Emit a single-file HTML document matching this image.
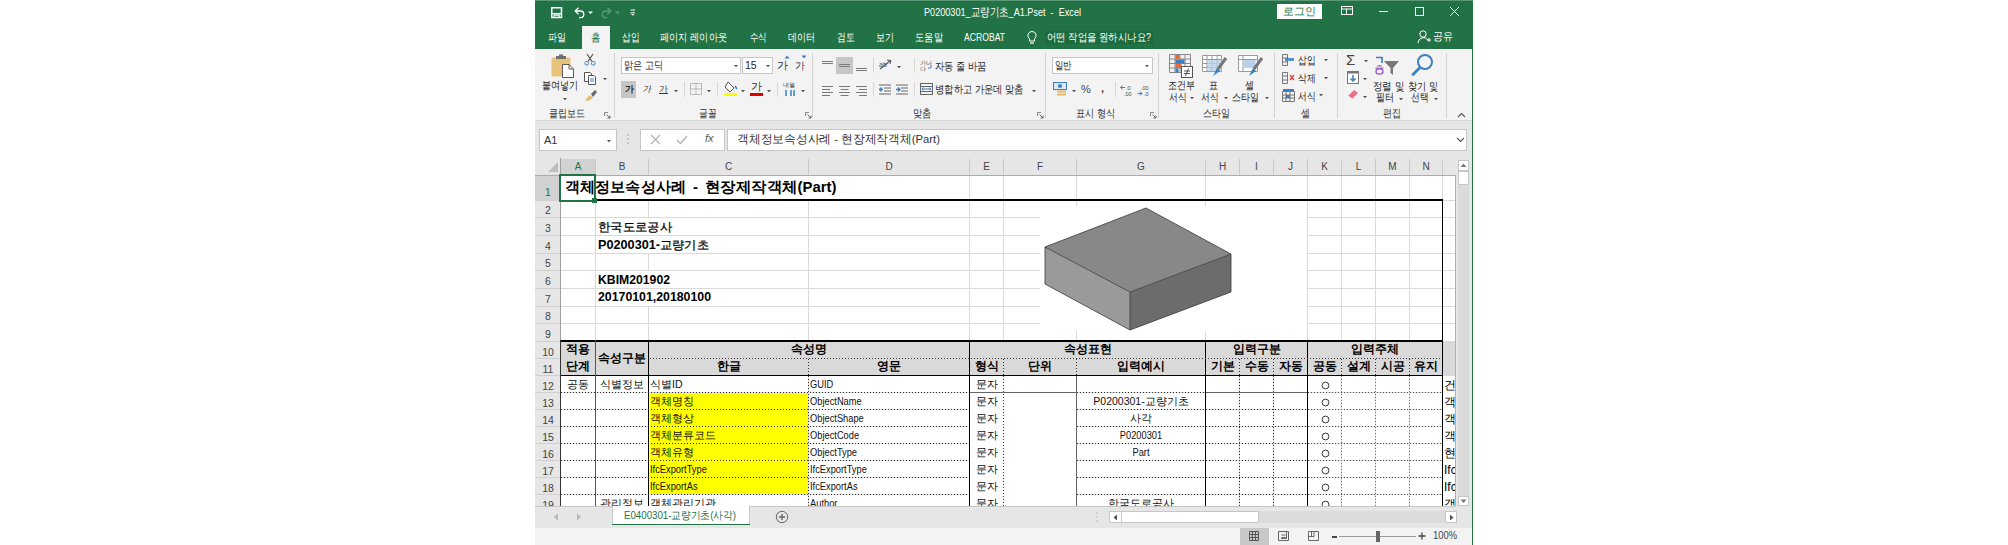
<!DOCTYPE html><html><head><meta charset="utf-8"><style>html,body{margin:0;padding:0;background:#fff;width:2008px;height:545px;overflow:hidden;font-family:"Liberation Sans", sans-serif;}div,span,svg{position:absolute;box-sizing:border-box;}span{white-space:nowrap;line-height:1;}</style></head><body>
<div style="left:535px;top:0px;width:938px;height:49px;background:#217346;"></div>
<div style="left:535px;top:0px;width:938px;height:1px;background:#5a9877;"></div>
<svg style="left:551px;top:7px;" width="12" height="12" viewBox="0 0 12 12"><path d="M0.75,0.75 H10.5 V10.5 H0.75 Z" fill="none" stroke="#fff" stroke-width="1.5"/><rect x="0.75" y="6" width="10" height="1.4" fill="#fff"/><path d="M3.2,10.5 V8.2 H8.2 V10.5" fill="none" stroke="#fff" stroke-width="1.2"/></svg>
<svg style="left:573px;top:6px;" width="22" height="13" viewBox="0 0 22 13"><path d="M2.5,5 H7.5 A3.3,3.3 0 0 1 7.5,11.6 H6" fill="none" stroke="#fff" stroke-width="1.3"/><path d="M5.5,1.8 L2.2,5 L5.5,8.2" fill="none" stroke="#fff" stroke-width="1.3"/><polygon points="15,5.5 20,5.5 17.5,8" fill="#fff"/></svg>
<svg style="left:600px;top:6px;" width="22" height="13" viewBox="0 0 22 13"><path d="M10.5,5 H5.5 A3.3,3.3 0 0 0 5.5,11.6 H7" fill="none" stroke="#5f9c7b" stroke-width="1.3"/><path d="M7.5,1.8 L10.8,5 L7.5,8.2" fill="none" stroke="#5f9c7b" stroke-width="1.3"/><polygon points="15,5.5 20,5.5 17.5,8" fill="#5f9c7b"/></svg>
<svg style="left:630px;top:9px;" width="6" height="8" viewBox="0 0 6 8"><path d="M0.5,1 H5 M0.5,3.8 H5" stroke="#fff" stroke-width="1"/><polygon points="1,5 4.5,5 2.75,6.8" fill="#fff"/></svg>
<span style="left:924px;top:7px;font-size:11.5px;color:#fff;transform-origin:0 0;transform:scaleX(0.7919);">P0200301_교량기초_A1.Pset&nbsp; - &nbsp;Excel</span>
<div style="left:1277px;top:4px;width:45px;height:15px;background:#fff;"></div>
<span style="left:1277.0px;top:6px;width:45px;text-align:center;font-size:10.5px;color:#217346;">로그인</span>
<svg style="left:1341px;top:6px;" width="13" height="11" viewBox="0 0 13 11"><rect x="0.5" y="0.5" width="11" height="8" fill="none" stroke="#fff" stroke-width="1"/><path d="M0.5,3 H11.5 M5.5,3 V8.5" stroke="#fff" stroke-width="1"/></svg>
<div style="left:1379px;top:11px;width:9px;height:1px;background:#fff;"></div>
<div style="left:1415px;top:7px;width:9px;height:9px;border:1px solid #fff;"></div>
<svg style="left:1449px;top:6px;" width="11" height="11" viewBox="0 0 11 11"><path d="M1,1 L10,10 M10,1 L1,10" stroke="#fff" stroke-width="1"/></svg>
<div style="left:582px;top:26px;width:28px;height:23px;background:#f3f3f3;"></div>
<span style="left:591px;top:32px;font-size:11px;color:#217346;transform-origin:0 0;transform:scaleX(0.8636);">홈</span>
<span style="left:547.6px;top:32px;font-size:11px;color:#fff;transform-origin:0 0;transform:scaleX(0.8273);">파일</span>
<span style="left:621.6px;top:32px;font-size:11px;color:#fff;transform-origin:0 0;transform:scaleX(0.7909);">삽입</span>
<span style="left:660px;top:32px;font-size:11px;color:#fff;transform-origin:0 0;transform:scaleX(0.8368);">페이지 레이아웃</span>
<span style="left:749.6px;top:32px;font-size:11px;color:#fff;transform-origin:0 0;transform:scaleX(0.7727);">수식</span>
<span style="left:788px;top:32px;font-size:11px;color:#fff;transform-origin:0 0;transform:scaleX(0.8182);">데이터</span>
<span style="left:836.8px;top:32px;font-size:11px;color:#fff;transform-origin:0 0;transform:scaleX(0.8000);">검토</span>
<span style="left:875.9px;top:32px;font-size:11px;color:#fff;transform-origin:0 0;transform:scaleX(0.8182);">보기</span>
<span style="left:915px;top:32px;font-size:11px;color:#fff;transform-origin:0 0;transform:scaleX(0.8485);">도움말</span>
<span style="left:964.4px;top:32px;font-size:11px;color:#fff;transform-origin:0 0;transform:scaleX(0.7830);">ACROBAT</span>
<svg style="left:1026px;top:30px;" width="12" height="15" viewBox="0 0 12 15"><path d="M6,1.5 A4,4 0 0 1 8.5,8.7 V11 H3.5 V8.7 A4,4 0 0 1 6,1.5 Z" fill="none" stroke="#fff" stroke-width="1"/><path d="M4,13 H8" stroke="#fff" stroke-width="1.2"/></svg>
<div style="left:1045px;top:31px;width:108px;height:13px;background:#1b6b3e;"></div>
<span style="left:1047px;top:31.5px;font-size:10.5px;color:#fff;transform-origin:0 0;transform:scaleX(0.8546);">어떤 작업을 원하시나요?</span>
<svg style="left:1417px;top:29px;" width="14" height="16" viewBox="0 0 14 16"><circle cx="6" cy="5" r="3.2" fill="none" stroke="#fff" stroke-width="1"/><path d="M1,14 A5.5,5.5 0 0 1 11,11" fill="none" stroke="#fff" stroke-width="1"/><path d="M10,11 H14 M12,9 V13" stroke="#fff" stroke-width="1"/></svg>
<span style="left:1433px;top:31px;font-size:10.5px;color:#fff;transform-origin:0 0;transform:scaleX(0.9091);">공유</span>
<div style="left:535px;top:49px;width:938px;height:72px;background:#f3f3f3;"></div>
<div style="left:535px;top:120px;width:938px;height:1px;background:#d6d6d6;"></div>
<div style="left:614px;top:53px;width:1px;height:65px;background:#d2d2d2;"></div>
<div style="left:812px;top:53px;width:1px;height:65px;background:#d2d2d2;"></div>
<div style="left:1045px;top:53px;width:1px;height:65px;background:#d2d2d2;"></div>
<div style="left:1158px;top:53px;width:1px;height:65px;background:#d2d2d2;"></div>
<div style="left:1274px;top:53px;width:1px;height:65px;background:#d2d2d2;"></div>
<div style="left:1337px;top:53px;width:1px;height:65px;background:#d2d2d2;"></div>
<div style="left:1446px;top:53px;width:1px;height:65px;background:#d2d2d2;"></div>
<svg style="left:550px;top:54px;" width="25" height="25" viewBox="0 0 25 25"><rect x="1.5" y="3.5" width="19" height="19" rx="1" fill="#e8c27c"/><rect x="6" y="2" width="10" height="3" fill="#6f6f6f"/><rect x="9" y="0.5" width="4" height="2" fill="#6f6f6f"/><path d="M12.5,10.5 H19 L23.5,15 V23.5 H12.5 Z" fill="#fff" stroke="#5a5a5a" stroke-width="1"/><path d="M19,10.5 V15 H23.5" fill="none" stroke="#5a5a5a" stroke-width="1"/></svg>
<span style="left:542px;top:80px;font-size:10.5px;color:#262626;transform-origin:0 0;transform:scaleX(0.8295);">붙여넣기</span>
<svg style="left:562px;top:97px;" width="6" height="4" viewBox="0 0 6 4"><polygon points="1,1 5,1 3,3.2" fill="#555"/></svg>
<svg style="left:583px;top:53px;" width="14" height="14" viewBox="0 0 14 14"><path d="M4,1 L9,8.5 M10,1 L5,8.5" stroke="#555" stroke-width="1.2"/><rect x="2" y="8.5" width="3.5" height="3.5" rx="1.2" fill="none" stroke="#3d7fc1" stroke-width="1"/><rect x="8.5" y="8.5" width="3.5" height="3.5" rx="1.2" fill="none" stroke="#3d7fc1" stroke-width="1"/></svg>
<svg style="left:583px;top:71px;" width="14" height="14" viewBox="0 0 14 14"><path d="M1.5,1.5 H7 L8.5,3 V10.5 H1.5 Z" fill="#fff" stroke="#555" stroke-width="1"/><path d="M5.5,4.5 H11 L12.5,6 V13.5 H5.5 Z" fill="#fff" stroke="#555" stroke-width="1"/><path d="M7,8 H11 M7,10 H11" stroke="#3d7fc1" stroke-width="1"/></svg>
<svg style="left:602px;top:77px;" width="6" height="4" viewBox="0 0 6 4"><polygon points="1,1 5,1 3,3.2" fill="#555"/></svg>
<svg style="left:584px;top:88px;" width="14" height="14" viewBox="0 0 14 14"><path d="M1,12 L6,7 L9,10 L4,13 Z" fill="#e8b86a"/><path d="M7,6 L11,2 L13,4 L9,9 Z" fill="#666"/></svg>
<span style="left:549px;top:108px;font-size:10.5px;color:#333;transform-origin:0 0;transform:scaleX(0.8182);">클립보드</span>
<svg style="left:604px;top:112px;" width="7" height="7" viewBox="0 0 7 7"><path d="M0.5,0.5 H4 M0.5,0.5 V4" stroke="#888" stroke-width="1"/><path d="M2.5,2.5 L6,6 M6,3.5 V6 H3.5" fill="none" stroke="#666" stroke-width="1"/></svg>
<div style="left:621px;top:57px;width:120px;height:17px;background:#fff;border:1px solid #c6c6c6;"></div>
<span style="left:624px;top:60px;font-size:10.5px;color:#262626;transform-origin:0 0;transform:scaleX(0.8312);">맑은 고딕</span>
<svg style="left:733px;top:64px;" width="6" height="4" viewBox="0 0 6 4"><polygon points="1,1 5,1 3,3.2" fill="#555"/></svg>
<div style="left:742px;top:57px;width:31px;height:17px;background:#fff;border:1px solid #c6c6c6;"></div>
<span style="left:745px;top:60px;font-size:10.5px;color:#262626;">15</span>
<svg style="left:765px;top:64px;" width="6" height="4" viewBox="0 0 6 4"><polygon points="1,1 5,1 3,3.2" fill="#555"/></svg>
<span style="left:777px;top:60px;font-size:10.5px;color:#333;">가</span>
<svg style="left:784px;top:55px;" width="6" height="4" viewBox="0 0 6 4"><polygon points="0.5,3.5 5.5,3.5 3,0.5" fill="#3d7fc1"/></svg>
<span style="left:795px;top:61px;font-size:9.5px;color:#333;">가</span>
<svg style="left:801px;top:55px;" width="6" height="4" viewBox="0 0 6 4"><polygon points="0.5,0.5 5.5,0.5 3,3.5" fill="#3d7fc1"/></svg>
<div style="left:621px;top:81px;width:15px;height:17px;background:#c6c6c6;"></div>
<span style="left:624.5px;top:85px;font-size:9px;font-weight:bold;color:#262626;">가</span>
<span style="left:642px;top:85px;font-size:9px;color:#333;"><i>가</i></span>
<span style="left:659px;top:85px;font-size:9px;color:#333;"><u>가</u></span>
<svg style="left:673px;top:89px;" width="6" height="4" viewBox="0 0 6 4"><polygon points="1,1 5,1 3,3.2" fill="#555"/></svg>
<div style="left:684px;top:82px;width:1px;height:15px;background:#d8d8d8;"></div>
<svg style="left:690px;top:83px;" width="12" height="13" viewBox="0 0 12 13"><path d="M0.5,0.5 H11.5 V11.5 H0.5 Z M6,0.5 V11.5 M0.5,6 H11.5" fill="none" stroke="#888" stroke-width="1" stroke-dasharray="1,1"/></svg>
<svg style="left:706px;top:89px;" width="6" height="4" viewBox="0 0 6 4"><polygon points="1,1 5,1 3,3.2" fill="#555"/></svg>
<div style="left:717px;top:82px;width:1px;height:15px;background:#d8d8d8;"></div>
<svg style="left:724px;top:80px;" width="16" height="18" viewBox="0 0 16 18"><path d="M4,2 L10,8 L6,12 L1,7 Z" fill="#fff" stroke="#555" stroke-width="1"/><path d="M11,6 L13,9" stroke="#3d7fc1" stroke-width="1.5"/></svg>
<div style="left:724px;top:93px;width:13px;height:3px;background:#ffff00;"></div>
<svg style="left:740px;top:89px;" width="6" height="4" viewBox="0 0 6 4"><polygon points="1,1 5,1 3,3.2" fill="#555"/></svg>
<span style="left:751px;top:81px;font-size:11px;color:#333;">가</span>
<div style="left:750px;top:93px;width:13px;height:3px;background:#e00000;"></div>
<svg style="left:766px;top:89px;" width="6" height="4" viewBox="0 0 6 4"><polygon points="1,1 5,1 3,3.2" fill="#555"/></svg>
<div style="left:777px;top:82px;width:1px;height:15px;background:#d8d8d8;"></div>
<svg style="left:783px;top:81px;" width="14" height="16" viewBox="0 0 14 16"><text x="0" y="6" font-size="6" fill="#444" font-family="Liberation Sans">내</text><text x="6" y="6" font-size="6" fill="#444" font-family="Liberation Sans">월</text><path d="M3,9 V15 M8,9 V15 M11,9 V15" stroke="#3d7fc1" stroke-width="1.5"/></svg>
<svg style="left:800px;top:89px;" width="6" height="4" viewBox="0 0 6 4"><polygon points="1,1 5,1 3,3.2" fill="#555"/></svg>
<span style="left:699px;top:108px;font-size:10.5px;color:#333;transform-origin:0 0;transform:scaleX(0.7955);">글꼴</span>
<svg style="left:805px;top:112px;" width="7" height="7" viewBox="0 0 7 7"><path d="M0.5,0.5 H4 M0.5,0.5 V4" stroke="#888" stroke-width="1"/><path d="M2.5,2.5 L6,6 M6,3.5 V6 H3.5" fill="none" stroke="#666" stroke-width="1"/></svg>
<svg style="left:822px;top:61px;" width="14" height="12" viewBox="0 0 14 12"><rect x="0" y="0" width="11" height="1" fill="#7a7a7a"/><rect x="0" y="2" width="11" height="1" fill="#7a7a7a"/></svg>
<div style="left:836px;top:57px;width:17px;height:17px;background:#c6c6c6;"></div>
<svg style="left:839px;top:64px;" width="14" height="12" viewBox="0 0 14 12"><rect x="0" y="0" width="11" height="1" fill="#7a7a7a"/><rect x="0" y="2" width="11" height="1" fill="#7a7a7a"/></svg>
<svg style="left:856px;top:68px;" width="14" height="12" viewBox="0 0 14 12"><rect x="0" y="0" width="11" height="1" fill="#7a7a7a"/><rect x="0" y="2" width="11" height="1" fill="#7a7a7a"/></svg>
<div style="left:873px;top:58px;width:1px;height:15px;background:#d8d8d8;"></div>
<svg style="left:878px;top:58px;" width="16" height="14" viewBox="0 0 16 14"><path d="M2,11 L12,3" stroke="#555" stroke-width="1.2"/><path d="M9,2 L13,2.5 L12,6" fill="none" stroke="#555" stroke-width="1"/><text x="1" y="9" font-size="7" fill="#555" font-family="Liberation Sans">ab</text></svg>
<svg style="left:896px;top:65px;" width="6" height="4" viewBox="0 0 6 4"><polygon points="1,1 5,1 3,3.2" fill="#555"/></svg>
<div style="left:914px;top:58px;width:1px;height:15px;background:#d8d8d8;"></div>
<svg style="left:920px;top:59px;" width="12" height="13" viewBox="0 0 12 13"><text x="0" y="6" font-size="6" fill="#555" font-family="Liberation Sans">가나</text><text x="0" y="12" font-size="6" fill="#555" font-family="Liberation Sans">다</text><path d="M8,9 H11 V6" fill="none" stroke="#3d7fc1" stroke-width="1"/></svg>
<span style="left:935px;top:61px;font-size:10.5px;color:#262626;transform-origin:0 0;transform:scaleX(0.8464);">자동 줄 바꿈</span>
<svg style="left:822px;top:86px;" width="14" height="12" viewBox="0 0 14 12"><rect x="0" y="0" width="11" height="1" fill="#7a7a7a"/><rect x="0" y="3" width="8" height="1" fill="#7a7a7a"/><rect x="0" y="6" width="11" height="1" fill="#7a7a7a"/><rect x="0" y="9" width="8" height="1" fill="#7a7a7a"/></svg>
<svg style="left:839px;top:86px;" width="14" height="12" viewBox="0 0 14 12"><rect x="0" y="0" width="11" height="1" fill="#7a7a7a"/><rect x="1.5" y="3" width="8" height="1" fill="#7a7a7a"/><rect x="0" y="6" width="11" height="1" fill="#7a7a7a"/><rect x="1.5" y="9" width="8" height="1" fill="#7a7a7a"/></svg>
<svg style="left:856px;top:86px;" width="14" height="12" viewBox="0 0 14 12"><rect x="0" y="0" width="11" height="1" fill="#7a7a7a"/><rect x="3" y="3" width="8" height="1" fill="#7a7a7a"/><rect x="0" y="6" width="11" height="1" fill="#7a7a7a"/><rect x="3" y="9" width="8" height="1" fill="#7a7a7a"/></svg>
<div style="left:873px;top:82px;width:1px;height:15px;background:#d8d8d8;"></div>
<svg style="left:879px;top:84px;" width="13" height="13" viewBox="0 0 13 13"><path d="M0,1 H12 M5,4 H12 M5,7 H12 M0,10 H12" stroke="#666" stroke-width="1"/><path d="M4,5.5 H0.5 M2.5,3.5 L0.5,5.5 L2.5,7.5" fill="none" stroke="#3d7fc1" stroke-width="1.3"/></svg>
<svg style="left:896px;top:84px;" width="13" height="13" viewBox="0 0 13 13"><path d="M0,1 H12 M5,4 H12 M5,7 H12 M0,10 H12" stroke="#666" stroke-width="1"/><path d="M0,5.5 H4 M2,3.5 L4,5.5 L2,7.5" fill="none" stroke="#3d7fc1" stroke-width="1.3"/></svg>
<div style="left:914px;top:82px;width:1px;height:15px;background:#d8d8d8;"></div>
<svg style="left:920px;top:83px;" width="13" height="12" viewBox="0 0 13 12"><rect x="0.5" y="0.5" width="12" height="11" fill="none" stroke="#666" stroke-width="1"/><path d="M0.5,3.5 H12.5 M0.5,8.5 H12.5" stroke="#666" stroke-width="1"/><path d="M2,6 H11 M3.5,4.7 L2,6 L3.5,7.3 M9.5,4.7 L11,6 L9.5,7.3" fill="none" stroke="#3d7fc1" stroke-width="1"/></svg>
<span style="left:935px;top:84px;font-size:10.5px;color:#262626;transform-origin:0 0;transform:scaleX(0.8441);">병합하고 가운데 맞춤</span>
<svg style="left:1031px;top:89px;" width="6" height="4" viewBox="0 0 6 4"><polygon points="1,1 5,1 3,3.2" fill="#555"/></svg>
<span style="left:913px;top:108px;font-size:10.5px;color:#333;transform-origin:0 0;transform:scaleX(0.8409);">맞춤</span>
<svg style="left:1037px;top:112px;" width="7" height="7" viewBox="0 0 7 7"><path d="M0.5,0.5 H4 M0.5,0.5 V4" stroke="#888" stroke-width="1"/><path d="M2.5,2.5 L6,6 M6,3.5 V6 H3.5" fill="none" stroke="#666" stroke-width="1"/></svg>
<div style="left:1052px;top:57px;width:101px;height:17px;background:#fff;border:1px solid #c6c6c6;"></div>
<span style="left:1055px;top:60px;font-size:10.5px;color:#262626;transform-origin:0 0;transform:scaleX(0.7727);">일반</span>
<svg style="left:1144px;top:64px;" width="6" height="4" viewBox="0 0 6 4"><polygon points="1,1 5,1 3,3.2" fill="#555"/></svg>
<svg style="left:1053px;top:82px;" width="15" height="15" viewBox="0 0 15 15"><rect x="0.5" y="0.5" width="13" height="7" fill="#dbe7f4" stroke="#3d7fc1" stroke-width="1"/><circle cx="7" cy="4" r="2" fill="#3d7fc1"/><rect x="4" y="8.5" width="9" height="2" fill="#e8b86a"/><rect x="4" y="11.5" width="9" height="2" fill="#e8b86a"/></svg>
<svg style="left:1071px;top:89px;" width="6" height="4" viewBox="0 0 6 4"><polygon points="1,1 5,1 3,3.2" fill="#555"/></svg>
<span style="left:1081px;top:84px;font-size:11px;color:#444;">%</span>
<span style="left:1101px;top:83px;font-size:11px;font-weight:bold;color:#444;">,</span>
<div style="left:1115px;top:82px;width:1px;height:15px;background:#d8d8d8;"></div>
<svg style="left:1120px;top:84px;" width="14" height="13" viewBox="0 0 14 13"><text x="6" y="5.5" font-size="5.5" fill="#444" font-family="Liberation Sans">.0</text><text x="4" y="11.5" font-size="5.5" fill="#444" font-family="Liberation Sans">.00</text><path d="M0.5,3.5 H5 M2.5,1.5 L0.5,3.5 L2.5,5.5" fill="none" stroke="#3d7fc1" stroke-width="1"/></svg>
<svg style="left:1137px;top:84px;" width="14" height="13" viewBox="0 0 14 13"><text x="4" y="5.5" font-size="5.5" fill="#444" font-family="Liberation Sans">.00</text><text x="7" y="11.5" font-size="5.5" fill="#444" font-family="Liberation Sans">.0</text><path d="M0.5,9.5 H5 M3,7.5 L5,9.5 L3,11.5" fill="none" stroke="#3d7fc1" stroke-width="1"/></svg>
<span style="left:1076px;top:108px;font-size:10.5px;color:#333;transform-origin:0 0;transform:scaleX(0.8312);">표시 형식</span>
<svg style="left:1150px;top:112px;" width="7" height="7" viewBox="0 0 7 7"><path d="M0.5,0.5 H4 M0.5,0.5 V4" stroke="#888" stroke-width="1"/><path d="M2.5,2.5 L6,6 M6,3.5 V6 H3.5" fill="none" stroke="#666" stroke-width="1"/></svg>
<svg style="left:1169px;top:54px;" width="24" height="24" viewBox="0 0 24 24"><path d="M0.5,0.5 H21.5 V18.5 H0.5 Z M6,0.5 V18.5 M11,0.5 V18.5 M16,0.5 V18.5 M0.5,5 H21.5 M0.5,9.5 H21.5 M0.5,14 H21.5" fill="none" stroke="#888" stroke-width="1"/><rect x="6.5" y="1" width="4" height="4" fill="#e26b3c"/><rect x="6.5" y="5.5" width="9" height="4" fill="#3d7fc1"/><rect x="6.5" y="10" width="6" height="4" fill="#e26b3c"/><rect x="6.5" y="14.5" width="3" height="4" fill="#3d7fc1"/><rect x="12.5" y="12.5" width="11" height="11" fill="#fff" stroke="#555" stroke-width="1"/><path d="M15,17 H21 M15,19.5 H21 M19.5,14.5 L16.5,22" stroke="#444" stroke-width="0.9"/></svg>
<span style="left:1167.5px;top:80px;font-size:10.5px;color:#262626;transform-origin:0 0;transform:scaleX(0.8182);">조건부</span>
<span style="left:1168.5px;top:92px;font-size:10.5px;color:#262626;transform-origin:0 0;transform:scaleX(0.7955);">서식</span>
<svg style="left:1189px;top:96px;" width="6" height="4" viewBox="0 0 6 4"><polygon points="1,1 5,1 3,3.2" fill="#555"/></svg>
<svg style="left:1202px;top:55px;" width="26" height="24" viewBox="0 0 26 24"><path d="M0.5,0.5 H19.5 V16.5 H0.5 Z M5,0.5 V16.5 M10,0.5 V16.5 M15,0.5 V16.5 M0.5,4.5 H19.5 M0.5,8.5 H19.5 M0.5,12.5 H19.5" fill="#fff" stroke="#999" stroke-width="1"/><rect x="5.5" y="5" width="14" height="11" fill="#b8d0ea" opacity="0.8"/><path d="M24,3 L16,14" stroke="#777" stroke-width="3"/><path d="M15,13 L18,16 L11,21 Z" fill="#3d7fc1"/></svg>
<span style="left:1209.0px;top:80px;font-size:10.5px;color:#262626;transform-origin:0 0;transform:scaleX(0.8182);">표</span>
<span style="left:1200.5px;top:92px;font-size:10.5px;color:#262626;transform-origin:0 0;transform:scaleX(0.7955);">서식</span>
<svg style="left:1223px;top:96px;" width="6" height="4" viewBox="0 0 6 4"><polygon points="1,1 5,1 3,3.2" fill="#555"/></svg>
<svg style="left:1238px;top:55px;" width="26" height="24" viewBox="0 0 26 24"><path d="M0.5,0.5 H19.5 V16.5 H0.5 Z M0.5,4.5 H19.5 M5,0.5 V16.5" fill="#fff" stroke="#999" stroke-width="1"/><rect x="5.5" y="5" width="12" height="8" fill="#b8d0ea"/><path d="M24,3 L16,14" stroke="#777" stroke-width="3"/><path d="M15,13 L18,16 L11,21 Z" fill="#3d7fc1"/></svg>
<span style="left:1244.5px;top:80px;font-size:10.5px;color:#262626;transform-origin:0 0;transform:scaleX(0.8182);">셀</span>
<span style="left:1231.5px;top:92px;font-size:10.5px;color:#262626;transform-origin:0 0;transform:scaleX(0.8182);">스타일</span>
<svg style="left:1264px;top:96px;" width="6" height="4" viewBox="0 0 6 4"><polygon points="1,1 5,1 3,3.2" fill="#555"/></svg>
<span style="left:1202.5px;top:108px;font-size:10.5px;color:#333;transform-origin:0 0;transform:scaleX(0.8182);">스타일</span>
<svg style="left:1282px;top:54px;" width="14" height="14" viewBox="0 0 14 14"><path d="M0.5,0.5 H5.5 V11.5 H0.5 Z M0.5,4 H5.5 M0.5,8 H5.5" fill="none" stroke="#777" stroke-width="1"/><rect x="3" y="4" width="9" height="3" fill="#3d7fc1" opacity="0.85"/></svg>
<span style="left:1298px;top:55px;font-size:10.5px;color:#262626;transform-origin:0 0;transform:scaleX(0.7955);">삽입</span>
<svg style="left:1323px;top:58px;" width="6" height="4" viewBox="0 0 6 4"><polygon points="1,1 5,1 3,3.2" fill="#555"/></svg>
<svg style="left:1282px;top:72px;" width="14" height="14" viewBox="0 0 14 14"><path d="M0.5,0.5 H5.5 V11.5 H0.5 Z M0.5,4 H5.5 M0.5,8 H5.5" fill="none" stroke="#777" stroke-width="1"/><path d="M8,3 L12,8 M12,3 L8,8" stroke="#e04040" stroke-width="1.3"/></svg>
<span style="left:1298px;top:73px;font-size:10.5px;color:#262626;transform-origin:0 0;transform:scaleX(0.7955);">삭제</span>
<svg style="left:1323px;top:75.5px;" width="6" height="4" viewBox="0 0 6 4"><polygon points="1,1 5,1 3,3.2" fill="#555"/></svg>
<svg style="left:1282px;top:89px;" width="14" height="14" viewBox="0 0 14 14"><path d="M0.5,2.5 H12.5 V12.5 H0.5 Z M0.5,6 H12.5 M0.5,9 H12.5 M4,2.5 V12.5 M8,2.5 V12.5" fill="none" stroke="#777" stroke-width="1"/><rect x="1" y="0" width="11" height="2" fill="#3d7fc1"/><rect x="4" y="6" width="4" height="3" fill="#3d7fc1"/></svg>
<span style="left:1298px;top:90.5px;font-size:10.5px;color:#262626;transform-origin:0 0;transform:scaleX(0.7955);">서식</span>
<svg style="left:1318px;top:93px;" width="6" height="4" viewBox="0 0 6 4"><polygon points="1,1 5,1 3,3.2" fill="#555"/></svg>
<span style="left:1301px;top:108px;font-size:10.5px;color:#333;transform-origin:0 0;transform:scaleX(0.8182);">셀</span>
<span style="left:1346px;top:52px;font-size:15px;color:#444;">Σ</span>
<svg style="left:1363px;top:59px;" width="6" height="4" viewBox="0 0 6 4"><polygon points="1,1 5,1 3,3.2" fill="#555"/></svg>
<svg style="left:1347px;top:71px;" width="12" height="13" viewBox="0 0 12 13"><rect x="0.5" y="0.5" width="11" height="12" fill="#fff" stroke="#777" stroke-width="1"/><rect x="0.5" y="0.5" width="11" height="2" fill="#777"/><path d="M6,4 V10 M3.5,7.5 L6,10 L8.5,7.5" fill="none" stroke="#3d7fc1" stroke-width="1.5"/></svg>
<svg style="left:1362px;top:77px;" width="6" height="4" viewBox="0 0 6 4"><polygon points="1,1 5,1 3,3.2" fill="#555"/></svg>
<svg style="left:1347px;top:89px;" width="12" height="11" viewBox="0 0 12 11"><path d="M1,7 L7,1 L11,4 L5,10 Z" fill="#e8728a"/><path d="M1,7 L5,10" stroke="#fff" stroke-width="1"/></svg>
<svg style="left:1362px;top:95px;" width="6" height="4" viewBox="0 0 6 4"><polygon points="1,1 5,1 3,3.2" fill="#555"/></svg>
<svg style="left:1375px;top:56px;" width="25" height="20" viewBox="0 0 25 20"><path d="M1,1.5 H7 V7" fill="none" stroke="#3d7fc1" stroke-width="1.6"/><path d="M2,10 H7 M4.5,9 V10.5" stroke="#9b59c8" stroke-width="1.2"/><ellipse cx="4.5" cy="15.5" rx="3.5" ry="2.6" fill="none" stroke="#9b59c8" stroke-width="1.4"/><path d="M0.5,12.2 H8.5" stroke="#9b59c8" stroke-width="1.2"/><path d="M9,5 H24 L18,12 V19 L15.5,17 V12 Z" fill="#777"/></svg>
<span style="left:1372.8px;top:80.5px;font-size:10.5px;color:#262626;transform-origin:0 0;transform:scaleX(0.8630);">정렬 및</span>
<span style="left:1376px;top:92px;font-size:10.5px;color:#262626;transform-origin:0 0;transform:scaleX(0.8182);">필터</span>
<svg style="left:1398px;top:97px;" width="6" height="4" viewBox="0 0 6 4"><polygon points="1,1 5,1 3,3.2" fill="#555"/></svg>
<svg style="left:1410px;top:53px;" width="24" height="24" viewBox="0 0 24 24"><circle cx="15" cy="9" r="7" fill="none" stroke="#3d7fc1" stroke-width="2"/><path d="M10,14.5 L3,21.5" stroke="#3d7fc1" stroke-width="2.8" stroke-linecap="round"/></svg>
<span style="left:1407.7px;top:80.5px;font-size:10.5px;color:#262626;transform-origin:0 0;transform:scaleX(0.8351);">찾기 및</span>
<span style="left:1411px;top:92px;font-size:10.5px;color:#262626;transform-origin:0 0;transform:scaleX(0.7955);">선택</span>
<svg style="left:1433px;top:97px;" width="6" height="4" viewBox="0 0 6 4"><polygon points="1,1 5,1 3,3.2" fill="#555"/></svg>
<span style="left:1383px;top:108px;font-size:10.5px;color:#333;transform-origin:0 0;transform:scaleX(0.8182);">편집</span>
<svg style="left:1457px;top:112px;" width="9" height="6" viewBox="0 0 9 6"><path d="M1,5 L4.5,1.5 L8,5" fill="none" stroke="#555" stroke-width="1.1"/></svg>
<div style="left:535px;top:121px;width:938px;height:37px;background:#e6e6e6;"></div>
<div style="left:539px;top:129px;width:78px;height:22px;background:#fff;border:1px solid #c6c6c6;"></div>
<span style="left:544px;top:135px;font-size:11px;color:#333;">A1</span>
<svg style="left:606px;top:139px;" width="6" height="4" viewBox="0 0 6 4"><polygon points="1,1 5,1 3,3.2" fill="#555"/></svg>
<svg style="left:626px;top:133px;" width="4" height="14" viewBox="0 0 4 14"><circle cx="2" cy="2" r="0.8" fill="#999"/><circle cx="2" cy="6" r="0.8" fill="#999"/><circle cx="2" cy="10" r="0.8" fill="#999"/></svg>
<div style="left:640px;top:129px;width:85px;height:22px;background:#fff;border:1px solid #c6c6c6;"></div>
<svg style="left:650px;top:134px;" width="11" height="11" viewBox="0 0 11 11"><path d="M1,1 L10,10 M10,1 L1,10" stroke="#b0b0b0" stroke-width="1.1"/></svg>
<svg style="left:676px;top:134px;" width="12" height="11" viewBox="0 0 12 11"><path d="M1,6 L4.5,9.5 L11,2" fill="none" stroke="#b0b0b0" stroke-width="1.2"/></svg>
<span style="left:705px;top:133px;font-size:11px;color:#555;font-family:"Liberation Serif",serif;"><i>fx</i></span>
<div style="left:727px;top:129px;width:740px;height:22px;background:#fff;border:1px solid #c6c6c6;"></div>
<span style="left:737px;top:134px;font-size:11.5px;color:#333;transform-origin:0 0;transform:scaleX(0.9808);">객체정보속성사례 - 현장제작객체(Part)</span>
<svg style="left:1456px;top:137px;" width="9" height="6" viewBox="0 0 9 6"><path d="M1,1 L4.5,4.5 L8,1" fill="none" stroke="#555" stroke-width="1.1"/></svg>
<div style="left:560px;top:175px;width:896px;height:331px;background:#fff;"></div>
<div style="left:535px;top:158px;width:921px;height:17px;background:#e6e6e6;"></div>
<div style="left:535px;top:175px;width:921px;height:1px;background:#ababab;"></div>
<div style="left:535px;top:176px;width:25px;height:330px;background:#e6e6e6;"></div>
<div style="left:560px;top:158px;width:1px;height:348px;background:#a0a0a0;"></div>
<div style="left:561px;top:159px;width:34px;height:16px;background:#d2d2d2;"></div>
<div style="left:535px;top:176px;width:25px;height:24px;background:#d2d2d2;"></div>
<svg style="left:547px;top:161px;" width="12" height="12" viewBox="0 0 12 12"><polygon points="11,1 11,11 1,11" fill="#bdbdbd"/></svg>
<span style="left:558.0px;top:161.6px;width:40px;text-align:center;font-size:10px;color:#217346;">A</span>
<span style="left:602.0px;top:161.6px;width:40px;text-align:center;font-size:10px;color:#444;">B</span>
<div style="left:595px;top:159px;width:1px;height:16px;background:#c8c8c8;"></div>
<span style="left:708.5px;top:161.6px;width:40px;text-align:center;font-size:10px;color:#444;">C</span>
<div style="left:648px;top:159px;width:1px;height:16px;background:#c8c8c8;"></div>
<span style="left:869.0px;top:161.6px;width:40px;text-align:center;font-size:10px;color:#444;">D</span>
<div style="left:808px;top:159px;width:1px;height:16px;background:#c8c8c8;"></div>
<span style="left:966.5px;top:161.6px;width:40px;text-align:center;font-size:10px;color:#444;">E</span>
<div style="left:969px;top:159px;width:1px;height:16px;background:#c8c8c8;"></div>
<span style="left:1020.0px;top:161.6px;width:40px;text-align:center;font-size:10px;color:#444;">F</span>
<div style="left:1003px;top:159px;width:1px;height:16px;background:#c8c8c8;"></div>
<span style="left:1121.0px;top:161.6px;width:40px;text-align:center;font-size:10px;color:#444;">G</span>
<div style="left:1076px;top:159px;width:1px;height:16px;background:#c8c8c8;"></div>
<span style="left:1202.5px;top:161.6px;width:40px;text-align:center;font-size:10px;color:#444;">H</span>
<div style="left:1205px;top:159px;width:1px;height:16px;background:#c8c8c8;"></div>
<span style="left:1236.5px;top:161.6px;width:40px;text-align:center;font-size:10px;color:#444;">I</span>
<div style="left:1239px;top:159px;width:1px;height:16px;background:#c8c8c8;"></div>
<span style="left:1270.5px;top:161.6px;width:40px;text-align:center;font-size:10px;color:#444;">J</span>
<div style="left:1273px;top:159px;width:1px;height:16px;background:#c8c8c8;"></div>
<span style="left:1304.5px;top:161.6px;width:40px;text-align:center;font-size:10px;color:#444;">K</span>
<div style="left:1307px;top:159px;width:1px;height:16px;background:#c8c8c8;"></div>
<span style="left:1338.5px;top:161.6px;width:40px;text-align:center;font-size:10px;color:#444;">L</span>
<div style="left:1341px;top:159px;width:1px;height:16px;background:#c8c8c8;"></div>
<span style="left:1372.5px;top:161.6px;width:40px;text-align:center;font-size:10px;color:#444;">M</span>
<div style="left:1375px;top:159px;width:1px;height:16px;background:#c8c8c8;"></div>
<span style="left:1406.0px;top:161.6px;width:40px;text-align:center;font-size:10px;color:#444;">N</span>
<div style="left:1409px;top:159px;width:1px;height:16px;background:#c8c8c8;"></div>
<div style="left:1442px;top:159px;width:1px;height:16px;background:#c8c8c8;"></div>
<span style="left:536.0px;top:186.5px;width:24px;text-align:center;font-size:10.5px;color:#217346;">1</span>
<div style="left:535px;top:200px;width:25px;height:1px;background:#cfcfcf;"></div>
<span style="left:536.0px;top:204.5px;width:24px;text-align:center;font-size:10.5px;color:#444;">2</span>
<div style="left:535px;top:217px;width:25px;height:1px;background:#cfcfcf;"></div>
<span style="left:536.0px;top:222.5px;width:24px;text-align:center;font-size:10.5px;color:#444;">3</span>
<div style="left:535px;top:235px;width:25px;height:1px;background:#cfcfcf;"></div>
<span style="left:536.0px;top:240.5px;width:24px;text-align:center;font-size:10.5px;color:#444;">4</span>
<div style="left:535px;top:253px;width:25px;height:1px;background:#cfcfcf;"></div>
<span style="left:536.0px;top:257.5px;width:24px;text-align:center;font-size:10.5px;color:#444;">5</span>
<div style="left:535px;top:270px;width:25px;height:1px;background:#cfcfcf;"></div>
<span style="left:536.0px;top:275.5px;width:24px;text-align:center;font-size:10.5px;color:#444;">6</span>
<div style="left:535px;top:288px;width:25px;height:1px;background:#cfcfcf;"></div>
<span style="left:536.0px;top:293.5px;width:24px;text-align:center;font-size:10.5px;color:#444;">7</span>
<div style="left:535px;top:306px;width:25px;height:1px;background:#cfcfcf;"></div>
<span style="left:536.0px;top:310.5px;width:24px;text-align:center;font-size:10.5px;color:#444;">8</span>
<div style="left:535px;top:323px;width:25px;height:1px;background:#cfcfcf;"></div>
<span style="left:536.0px;top:328.5px;width:24px;text-align:center;font-size:10.5px;color:#444;">9</span>
<div style="left:535px;top:341px;width:25px;height:1px;background:#cfcfcf;"></div>
<span style="left:536.0px;top:346.5px;width:24px;text-align:center;font-size:10.5px;color:#444;">10</span>
<div style="left:535px;top:358px;width:25px;height:1px;background:#cfcfcf;"></div>
<span style="left:536.0px;top:363.5px;width:24px;text-align:center;font-size:10.5px;color:#444;">11</span>
<div style="left:535px;top:375px;width:25px;height:1px;background:#cfcfcf;"></div>
<span style="left:536.0px;top:380.5px;width:24px;text-align:center;font-size:10.5px;color:#444;">12</span>
<div style="left:535px;top:392px;width:25px;height:1px;background:#cfcfcf;"></div>
<span style="left:536.0px;top:397.5px;width:24px;text-align:center;font-size:10.5px;color:#444;">13</span>
<div style="left:535px;top:409px;width:25px;height:1px;background:#cfcfcf;"></div>
<span style="left:536.0px;top:414.5px;width:24px;text-align:center;font-size:10.5px;color:#444;">14</span>
<div style="left:535px;top:426px;width:25px;height:1px;background:#cfcfcf;"></div>
<span style="left:536.0px;top:431.5px;width:24px;text-align:center;font-size:10.5px;color:#444;">15</span>
<div style="left:535px;top:443px;width:25px;height:1px;background:#cfcfcf;"></div>
<span style="left:536.0px;top:448.5px;width:24px;text-align:center;font-size:10.5px;color:#444;">16</span>
<div style="left:535px;top:460px;width:25px;height:1px;background:#cfcfcf;"></div>
<span style="left:536.0px;top:465.5px;width:24px;text-align:center;font-size:10.5px;color:#444;">17</span>
<div style="left:535px;top:477px;width:25px;height:1px;background:#cfcfcf;"></div>
<span style="left:536.0px;top:482.5px;width:24px;text-align:center;font-size:10.5px;color:#444;">18</span>
<div style="left:535px;top:494px;width:25px;height:1px;background:#cfcfcf;"></div>
<span style="left:536.0px;top:499.5px;width:24px;text-align:center;font-size:10.5px;color:#444;">19</span>
<div style="left:535px;top:511px;width:25px;height:1px;background:#cfcfcf;"></div>
<div style="left:595px;top:176px;width:1px;height:330px;background:#dadada;"></div>
<div style="left:648px;top:176px;width:1px;height:330px;background:#dadada;"></div>
<div style="left:808px;top:176px;width:1px;height:330px;background:#dadada;"></div>
<div style="left:969px;top:176px;width:1px;height:330px;background:#dadada;"></div>
<div style="left:1003px;top:176px;width:1px;height:330px;background:#dadada;"></div>
<div style="left:1076px;top:176px;width:1px;height:330px;background:#dadada;"></div>
<div style="left:1205px;top:176px;width:1px;height:330px;background:#dadada;"></div>
<div style="left:1239px;top:341px;width:1px;height:165px;background:#dadada;"></div>
<div style="left:1273px;top:341px;width:1px;height:165px;background:#dadada;"></div>
<div style="left:1307px;top:176px;width:1px;height:330px;background:#dadada;"></div>
<div style="left:1341px;top:176px;width:1px;height:330px;background:#dadada;"></div>
<div style="left:1375px;top:176px;width:1px;height:330px;background:#dadada;"></div>
<div style="left:1409px;top:176px;width:1px;height:330px;background:#dadada;"></div>
<div style="left:1442px;top:176px;width:1px;height:330px;background:#dadada;"></div>
<div style="left:561px;top:200px;width:895px;height:1px;background:#dadada;"></div>
<div style="left:561px;top:217px;width:895px;height:1px;background:#dadada;"></div>
<div style="left:561px;top:235px;width:895px;height:1px;background:#dadada;"></div>
<div style="left:561px;top:253px;width:895px;height:1px;background:#dadada;"></div>
<div style="left:561px;top:270px;width:895px;height:1px;background:#dadada;"></div>
<div style="left:561px;top:288px;width:895px;height:1px;background:#dadada;"></div>
<div style="left:561px;top:306px;width:895px;height:1px;background:#dadada;"></div>
<div style="left:561px;top:323px;width:895px;height:1px;background:#dadada;"></div>
<div style="left:561px;top:341px;width:895px;height:1px;background:#dadada;"></div>
<div style="left:561px;top:358px;width:895px;height:1px;background:#dadada;"></div>
<div style="left:561px;top:375px;width:895px;height:1px;background:#dadada;"></div>
<div style="left:561px;top:392px;width:895px;height:1px;background:#dadada;"></div>
<div style="left:561px;top:409px;width:895px;height:1px;background:#dadada;"></div>
<div style="left:561px;top:426px;width:895px;height:1px;background:#dadada;"></div>
<div style="left:561px;top:443px;width:895px;height:1px;background:#dadada;"></div>
<div style="left:561px;top:460px;width:895px;height:1px;background:#dadada;"></div>
<div style="left:561px;top:477px;width:895px;height:1px;background:#dadada;"></div>
<div style="left:561px;top:494px;width:895px;height:1px;background:#dadada;"></div>
<div style="left:595px;top:176px;width:1px;height:24px;background:#fff;"></div>
<div style="left:648px;top:176px;width:1px;height:24px;background:#fff;"></div>
<div style="left:808px;top:176px;width:1px;height:24px;background:#fff;"></div>
<div style="left:648px;top:218px;width:1px;height:17px;background:#fff;"></div>
<div style="left:648px;top:236px;width:1px;height:17px;background:#fff;"></div>
<div style="left:648px;top:271px;width:1px;height:17px;background:#fff;"></div>
<div style="left:648px;top:289px;width:1px;height:17px;background:#fff;"></div>
<div style="left:1040px;top:206px;width:267px;height:125px;background:#fff;"></div>
<svg style="left:1040px;top:206px;" width="267" height="126" viewBox="0 0 267 126"><polygon points="5,41 90,86 90,124 5,78" fill="#9a9a9a"/><polygon points="90,86 191,48 191,86 90,124" fill="#6c6c6c"/><polygon points="106,2 191,48 90,86 5,41" fill="#888888"/><path d="M106,2 L191,48 L191,86 L90,124 L5,78 L5,41 Z M5,41 L90,86 L191,48 M90,86 L90,124" fill="none" stroke="#3a3a3a" stroke-width="0.8"/></svg>
<span style="left:564.5px;top:180px;font-size:14.5px;font-weight:bold;color:#000;transform-origin:0 0;transform:scaleX(1.0083);">객체정보속성사례</span>
<span style="left:692.5px;top:180px;font-size:14.5px;font-weight:bold;color:#000;transform-origin:0 0;transform:scaleX(1.0323);">-</span>
<span style="left:704.5px;top:180px;font-size:14.5px;font-weight:bold;color:#000;transform-origin:0 0;transform:scaleX(1.0283);">현장제작객체(Part)</span>
<span style="left:598px;top:221px;font-size:12px;color:#000;-webkit-text-stroke:0.25px #000;transform-origin:0 0;transform:scaleX(1.0278);">한국도로공사</span>
<span style="left:598px;top:239px;font-size:12px;font-weight:bold;color:#000;transform-origin:0 0;transform:scaleX(1.0559);">P0200301-</span>
<span style="left:660px;top:239px;font-size:12px;color:#000;-webkit-text-stroke:0.25px #000;transform-origin:0 0;transform:scaleX(1.0208);">교량기초</span>
<span style="left:598px;top:274px;font-size:12px;font-weight:bold;color:#000;transform-origin:0 0;transform:scaleX(1.0181);">KBIM201902</span>
<span style="left:598px;top:291px;font-size:12px;font-weight:bold;color:#000;transform-origin:0 0;transform:scaleX(1.0261);">20170101,20180100</span>
<div style="left:597px;top:199px;width:846px;height:2px;background:#000;"></div>
<div style="left:1442px;top:199px;width:1px;height:142px;background:#000;"></div>
<div style="left:561px;top:341px;width:895px;height:34px;background:#d9d9d9;"></div>
<div style="left:560px;top:340px;width:883px;height:2px;background:#000;"></div>
<div style="left:560px;top:375px;width:883px;height:1px;background:#000;"></div>
<div style="left:648px;top:340px;width:1px;height:166px;background:#000;"></div>
<div style="left:969px;top:340px;width:1px;height:166px;background:#000;"></div>
<div style="left:1205px;top:340px;width:1px;height:166px;background:#000;"></div>
<div style="left:1307px;top:340px;width:1px;height:166px;background:#000;"></div>
<div style="left:1442px;top:340px;width:1px;height:166px;background:#000;"></div>
<div style="left:560px;top:340px;width:1px;height:166px;background:#333;"></div>
<div style="left:595px;top:340px;width:1px;height:166px;background:#555;"></div>
<div style="left:650px;top:358px;width:792px;height:1px;background:repeating-linear-gradient(90deg,#333 0 1px,transparent 1px 3px);"></div>
<div style="left:808px;top:359px;width:1px;height:16px;background:repeating-linear-gradient(180deg,#333 0 1px,transparent 1px 3px);"></div>
<div style="left:1003px;top:359px;width:1px;height:16px;background:repeating-linear-gradient(180deg,#333 0 1px,transparent 1px 3px);"></div>
<div style="left:1076px;top:359px;width:1px;height:16px;background:repeating-linear-gradient(180deg,#333 0 1px,transparent 1px 3px);"></div>
<div style="left:1239px;top:359px;width:1px;height:16px;background:repeating-linear-gradient(180deg,#333 0 1px,transparent 1px 3px);"></div>
<div style="left:1273px;top:359px;width:1px;height:16px;background:repeating-linear-gradient(180deg,#333 0 1px,transparent 1px 3px);"></div>
<div style="left:1341px;top:359px;width:1px;height:16px;background:repeating-linear-gradient(180deg,#333 0 1px,transparent 1px 3px);"></div>
<div style="left:1375px;top:359px;width:1px;height:16px;background:repeating-linear-gradient(180deg,#333 0 1px,transparent 1px 3px);"></div>
<div style="left:1409px;top:359px;width:1px;height:16px;background:repeating-linear-gradient(180deg,#333 0 1px,transparent 1px 3px);"></div>
<span style="left:560.0px;top:343px;width:36px;text-align:center;font-size:12px;font-weight:bold;color:#000;">적용</span>
<span style="left:560.0px;top:360px;width:36px;text-align:center;font-size:12px;font-weight:bold;color:#000;">단계</span>
<span style="left:596.0px;top:352px;width:52px;text-align:center;font-size:12px;font-weight:bold;color:#000;">속성구분</span>
<span style="left:759.0px;top:343px;width:100px;text-align:center;font-size:12px;font-weight:bold;color:#000;">속성명</span>
<span style="left:678.5px;top:360px;width:100px;text-align:center;font-size:12px;font-weight:bold;color:#000;">한글</span>
<span style="left:839.0px;top:360px;width:100px;text-align:center;font-size:12px;font-weight:bold;color:#000;">영문</span>
<span style="left:1037.5px;top:343px;width:100px;text-align:center;font-size:12px;font-weight:bold;color:#000;">속성표현</span>
<span style="left:969.5px;top:360px;width:34px;text-align:center;font-size:12px;font-weight:bold;color:#000;">형식</span>
<span style="left:1010.0px;top:360px;width:60px;text-align:center;font-size:12px;font-weight:bold;color:#000;">단위</span>
<span style="left:1091.0px;top:360px;width:100px;text-align:center;font-size:12px;font-weight:bold;color:#000;">입력예시</span>
<span style="left:1206.5px;top:343px;width:100px;text-align:center;font-size:12px;font-weight:bold;color:#000;">입력구분</span>
<span style="left:1205.5px;top:360px;width:34px;text-align:center;font-size:12px;font-weight:bold;color:#000;">기본</span>
<span style="left:1239.5px;top:360px;width:34px;text-align:center;font-size:12px;font-weight:bold;color:#000;">수동</span>
<span style="left:1273.5px;top:360px;width:34px;text-align:center;font-size:12px;font-weight:bold;color:#000;">자동</span>
<span style="left:1325.3px;top:343px;width:100px;text-align:center;font-size:12px;font-weight:bold;color:#000;">입력주체</span>
<span style="left:1307.5px;top:360px;width:34px;text-align:center;font-size:12px;font-weight:bold;color:#000;">공동</span>
<span style="left:1341.5px;top:360px;width:34px;text-align:center;font-size:12px;font-weight:bold;color:#000;">설계</span>
<span style="left:1375.5px;top:360px;width:34px;text-align:center;font-size:12px;font-weight:bold;color:#000;">시공</span>
<span style="left:1409.0px;top:360px;width:34px;text-align:center;font-size:12px;font-weight:bold;color:#000;">유지</span>
<div style="left:650px;top:393px;width:158px;height:101px;background:#ffff00;"></div>
<div style="left:970px;top:376px;width:106px;height:130px;background:#fff;"></div>
<div style="left:1443px;top:376px;width:12px;height:130px;background:#fff;"></div>
<div style="left:561px;top:392px;width:408px;height:1px;background:repeating-linear-gradient(90deg,#333 0 1px,transparent 1px 3px);"></div>
<div style="left:1077px;top:392px;width:128px;height:1px;background:repeating-linear-gradient(90deg,#333 0 1px,transparent 1px 3px);"></div>
<div style="left:970px;top:392px;width:106px;height:1px;background:#666;"></div>
<div style="left:1206px;top:392px;width:101px;height:1px;background:#666;"></div>
<div style="left:1308px;top:392px;width:134px;height:1px;background:repeating-linear-gradient(90deg,#555 0 1px,transparent 1px 3px);"></div>
<div style="left:561px;top:409px;width:408px;height:1px;background:repeating-linear-gradient(90deg,#333 0 1px,transparent 1px 3px);"></div>
<div style="left:1077px;top:409px;width:128px;height:1px;background:repeating-linear-gradient(90deg,#333 0 1px,transparent 1px 3px);"></div>
<div style="left:1206px;top:409px;width:101px;height:1px;background:repeating-linear-gradient(90deg,#333 0 1px,transparent 1px 3px);"></div>
<div style="left:1308px;top:409px;width:134px;height:1px;background:repeating-linear-gradient(90deg,#555 0 1px,transparent 1px 3px);"></div>
<div style="left:561px;top:426px;width:408px;height:1px;background:repeating-linear-gradient(90deg,#333 0 1px,transparent 1px 3px);"></div>
<div style="left:1077px;top:426px;width:128px;height:1px;background:repeating-linear-gradient(90deg,#333 0 1px,transparent 1px 3px);"></div>
<div style="left:1206px;top:426px;width:101px;height:1px;background:repeating-linear-gradient(90deg,#333 0 1px,transparent 1px 3px);"></div>
<div style="left:1308px;top:426px;width:134px;height:1px;background:repeating-linear-gradient(90deg,#555 0 1px,transparent 1px 3px);"></div>
<div style="left:561px;top:443px;width:408px;height:1px;background:repeating-linear-gradient(90deg,#333 0 1px,transparent 1px 3px);"></div>
<div style="left:1077px;top:443px;width:128px;height:1px;background:repeating-linear-gradient(90deg,#333 0 1px,transparent 1px 3px);"></div>
<div style="left:1206px;top:443px;width:101px;height:1px;background:repeating-linear-gradient(90deg,#333 0 1px,transparent 1px 3px);"></div>
<div style="left:1308px;top:443px;width:134px;height:1px;background:repeating-linear-gradient(90deg,#555 0 1px,transparent 1px 3px);"></div>
<div style="left:561px;top:460px;width:408px;height:1px;background:repeating-linear-gradient(90deg,#333 0 1px,transparent 1px 3px);"></div>
<div style="left:1077px;top:460px;width:128px;height:1px;background:repeating-linear-gradient(90deg,#333 0 1px,transparent 1px 3px);"></div>
<div style="left:1206px;top:460px;width:101px;height:1px;background:repeating-linear-gradient(90deg,#333 0 1px,transparent 1px 3px);"></div>
<div style="left:1308px;top:460px;width:134px;height:1px;background:repeating-linear-gradient(90deg,#555 0 1px,transparent 1px 3px);"></div>
<div style="left:561px;top:477px;width:408px;height:1px;background:repeating-linear-gradient(90deg,#333 0 1px,transparent 1px 3px);"></div>
<div style="left:1077px;top:477px;width:128px;height:1px;background:repeating-linear-gradient(90deg,#333 0 1px,transparent 1px 3px);"></div>
<div style="left:1206px;top:477px;width:101px;height:1px;background:repeating-linear-gradient(90deg,#333 0 1px,transparent 1px 3px);"></div>
<div style="left:1308px;top:477px;width:134px;height:1px;background:repeating-linear-gradient(90deg,#555 0 1px,transparent 1px 3px);"></div>
<div style="left:561px;top:494px;width:408px;height:1px;background:repeating-linear-gradient(90deg,#333 0 1px,transparent 1px 3px);"></div>
<div style="left:1077px;top:494px;width:128px;height:1px;background:repeating-linear-gradient(90deg,#333 0 1px,transparent 1px 3px);"></div>
<div style="left:1206px;top:494px;width:101px;height:1px;background:repeating-linear-gradient(90deg,#333 0 1px,transparent 1px 3px);"></div>
<div style="left:1308px;top:494px;width:134px;height:1px;background:repeating-linear-gradient(90deg,#555 0 1px,transparent 1px 3px);"></div>
<div style="left:808px;top:376px;width:1px;height:130px;background:repeating-linear-gradient(180deg,#333 0 1px,transparent 1px 3px);"></div>
<div style="left:1003px;top:376px;width:1px;height:130px;background:repeating-linear-gradient(180deg,#333 0 1px,transparent 1px 3px);"></div>
<div style="left:1239px;top:376px;width:1px;height:130px;background:repeating-linear-gradient(180deg,#333 0 1px,transparent 1px 3px);"></div>
<div style="left:1273px;top:376px;width:1px;height:130px;background:repeating-linear-gradient(180deg,#333 0 1px,transparent 1px 3px);"></div>
<div style="left:1341px;top:376px;width:1px;height:130px;background:repeating-linear-gradient(180deg,#777 0 1px,transparent 1px 3px);"></div>
<div style="left:1375px;top:376px;width:1px;height:130px;background:repeating-linear-gradient(180deg,#777 0 1px,transparent 1px 3px);"></div>
<div style="left:1409px;top:376px;width:1px;height:130px;background:repeating-linear-gradient(180deg,#777 0 1px,transparent 1px 3px);"></div>
<div style="left:1076px;top:376px;width:1px;height:130px;background:#666;"></div>
<span style="left:559.5px;top:378.5px;width:36px;text-align:center;font-size:10.5px;color:#111;">공동</span>
<span style="left:595.5px;top:378.5px;width:52px;text-align:center;font-size:10.5px;color:#111;">식별정보</span>
<span style="left:650px;top:378.5px;font-size:10.5px;color:#111;">식별ID</span>
<span style="left:810px;top:380px;font-size:10px;color:#111;transform-origin:0 0;transform:scaleX(0.93);">GUID</span>
<span style="left:970.0px;top:378.5px;width:34px;text-align:center;font-size:10.5px;color:#111;">문자</span>
<svg style="left:1320.5px;top:380.5px;" width="9" height="9" viewBox="0 0 9 9"><circle cx="4.5" cy="4.5" r="3.4" fill="none" stroke="#222" stroke-width="0.9"/></svg>
<span style="left:1444px;top:379px;font-size:12px;color:#000;">건</span>
<span style="left:650px;top:395.5px;font-size:10.5px;color:#111;">객체명칭</span>
<span style="left:810px;top:397px;font-size:10px;color:#111;transform-origin:0 0;transform:scaleX(0.93);">ObjectName</span>
<span style="left:970.0px;top:395.5px;width:34px;text-align:center;font-size:10.5px;color:#111;">문자</span>
<span style="left:1077.0px;top:395.5px;width:128px;text-align:center;font-size:10.5px;color:#111;">P0200301-교량기초</span>
<svg style="left:1320.5px;top:397.5px;" width="9" height="9" viewBox="0 0 9 9"><circle cx="4.5" cy="4.5" r="3.4" fill="none" stroke="#222" stroke-width="0.9"/></svg>
<span style="left:1444px;top:396px;font-size:12px;color:#000;">객</span>
<span style="left:650px;top:412.5px;font-size:10.5px;color:#111;">객체형상</span>
<span style="left:810px;top:414px;font-size:10px;color:#111;transform-origin:0 0;transform:scaleX(0.93);">ObjectShape</span>
<span style="left:970.0px;top:412.5px;width:34px;text-align:center;font-size:10.5px;color:#111;">문자</span>
<span style="left:1077.0px;top:412.5px;width:128px;text-align:center;font-size:10.5px;color:#111;">사각</span>
<svg style="left:1320.5px;top:414.5px;" width="9" height="9" viewBox="0 0 9 9"><circle cx="4.5" cy="4.5" r="3.4" fill="none" stroke="#222" stroke-width="0.9"/></svg>
<span style="left:1444px;top:413px;font-size:12px;color:#000;">객</span>
<span style="left:650px;top:429.5px;font-size:10.5px;color:#111;">객체분류코드</span>
<span style="left:810px;top:431px;font-size:10px;color:#111;transform-origin:0 0;transform:scaleX(0.93);">ObjectCode</span>
<span style="left:970.0px;top:429.5px;width:34px;text-align:center;font-size:10.5px;color:#111;">문자</span>
<span style="left:1077.0px;top:431px;width:128px;text-align:center;font-size:10px;color:#111;transform:scaleX(0.93);">P0200301</span>
<svg style="left:1320.5px;top:431.5px;" width="9" height="9" viewBox="0 0 9 9"><circle cx="4.5" cy="4.5" r="3.4" fill="none" stroke="#222" stroke-width="0.9"/></svg>
<span style="left:1444px;top:430px;font-size:12px;color:#000;">객</span>
<span style="left:650px;top:446.5px;font-size:10.5px;color:#111;">객체유형</span>
<span style="left:810px;top:448px;font-size:10px;color:#111;transform-origin:0 0;transform:scaleX(0.93);">ObjectType</span>
<span style="left:970.0px;top:446.5px;width:34px;text-align:center;font-size:10.5px;color:#111;">문자</span>
<span style="left:1077.0px;top:448px;width:128px;text-align:center;font-size:10px;color:#111;transform:scaleX(0.93);">Part</span>
<svg style="left:1320.5px;top:448.5px;" width="9" height="9" viewBox="0 0 9 9"><circle cx="4.5" cy="4.5" r="3.4" fill="none" stroke="#222" stroke-width="0.9"/></svg>
<span style="left:1444px;top:447px;font-size:12px;color:#000;">현</span>
<span style="left:650px;top:465px;font-size:10px;color:#111;transform-origin:0 0;transform:scaleX(0.93);">IfcExportType</span>
<span style="left:810px;top:465px;font-size:10px;color:#111;transform-origin:0 0;transform:scaleX(0.93);">IfcExportType</span>
<span style="left:970.0px;top:463.5px;width:34px;text-align:center;font-size:10.5px;color:#111;">문자</span>
<svg style="left:1320.5px;top:465.5px;" width="9" height="9" viewBox="0 0 9 9"><circle cx="4.5" cy="4.5" r="3.4" fill="none" stroke="#222" stroke-width="0.9"/></svg>
<span style="left:1444px;top:464px;font-size:12px;color:#000;">Ifc</span>
<span style="left:650px;top:482px;font-size:10px;color:#111;transform-origin:0 0;transform:scaleX(0.93);">IfcExportAs</span>
<span style="left:810px;top:482px;font-size:10px;color:#111;transform-origin:0 0;transform:scaleX(0.93);">IfcExportAs</span>
<span style="left:970.0px;top:480.5px;width:34px;text-align:center;font-size:10.5px;color:#111;">문자</span>
<svg style="left:1320.5px;top:482.5px;" width="9" height="9" viewBox="0 0 9 9"><circle cx="4.5" cy="4.5" r="3.4" fill="none" stroke="#222" stroke-width="0.9"/></svg>
<span style="left:1444px;top:481px;font-size:12px;color:#000;">Ifc</span>
<span style="left:595.5px;top:497.5px;width:52px;text-align:center;font-size:10.5px;color:#111;">관리정보</span>
<span style="left:650px;top:497.5px;font-size:10.5px;color:#111;">객체관리기관</span>
<span style="left:810px;top:499px;font-size:10px;color:#111;transform-origin:0 0;transform:scaleX(0.93);">Author</span>
<span style="left:970.0px;top:497.5px;width:34px;text-align:center;font-size:10.5px;color:#111;">문자</span>
<span style="left:1077.0px;top:497.5px;width:128px;text-align:center;font-size:10.5px;color:#111;">한국도로공사</span>
<svg style="left:1320.5px;top:499.5px;" width="9" height="9" viewBox="0 0 9 9"><circle cx="4.5" cy="4.5" r="3.4" fill="none" stroke="#222" stroke-width="0.9"/></svg>
<span style="left:1444px;top:498px;font-size:12px;color:#000;">객</span>
<div style="left:559px;top:174px;width:37px;height:28px;border:2px solid #217346;"></div>
<div style="left:592px;top:198px;width:5px;height:5px;background:#217346;"></div>
<div style="left:1455px;top:175px;width:1px;height:331px;background:#b0b0b0;"></div>
<div style="left:1456px;top:158px;width:16px;height:348px;background:#e6e6e6;"></div>
<div style="left:1458px;top:185px;width:11px;height:311px;background:#dadada;"></div>
<div style="left:1458px;top:160px;width:11px;height:11px;background:#fff;border:1px solid #c6c6c6;"></div>
<svg style="left:1460px;top:163px;" width="7" height="5" viewBox="0 0 7 5"><polygon points="0.5,4 6.5,4 3.5,0.5" fill="#777"/></svg>
<div style="left:1458px;top:171px;width:11px;height:14px;background:#fff;border:1px solid #c6c6c6;"></div>
<div style="left:1458px;top:496px;width:11px;height:10px;background:#fff;border:1px solid #c6c6c6;"></div>
<svg style="left:1460px;top:499px;" width="7" height="5" viewBox="0 0 7 5"><polygon points="0.5,0.5 6.5,0.5 3.5,4" fill="#777"/></svg>
<div style="left:535px;top:506px;width:937px;height:22px;background:#e6e6e6;"></div>
<div style="left:535px;top:506px;width:921px;height:1px;background:#c6c6c6;"></div>
<svg style="left:553px;top:513px;" width="6" height="8" viewBox="0 0 6 8"><polygon points="5,0.5 5,7.5 1,4" fill="#b5b5b5"/></svg>
<svg style="left:576px;top:513px;" width="6" height="8" viewBox="0 0 6 8"><polygon points="1,0.5 1,7.5 5,4" fill="#b5b5b5"/></svg>
<div style="left:612px;top:506px;width:138px;height:19px;background:#fff;border-left:1px solid #c6c6c6;border-right:1px solid #c6c6c6;"></div>
<div style="left:612px;top:523.5px;width:138px;height:1.5px;background:#217346;"></div>
<span style="left:624px;top:510px;font-size:11px;color:#217346;transform-origin:0 0;transform:scaleX(0.8808);">E0400301-교량기초(사각)</span>
<svg style="left:775px;top:510px;" width="14" height="14" viewBox="0 0 14 14"><circle cx="7" cy="7" r="5.7" fill="none" stroke="#666" stroke-width="1"/><path d="M7,4 V10 M4,7 H10" stroke="#666" stroke-width="1.4"/></svg>
<svg style="left:1095px;top:511px;" width="4" height="12" viewBox="0 0 4 12"><circle cx="2" cy="2" r="0.7" fill="#aaa"/><circle cx="2" cy="6" r="0.7" fill="#aaa"/><circle cx="2" cy="10" r="0.7" fill="#aaa"/></svg>
<div style="left:1109px;top:511px;width:347px;height:12px;background:#dcdcdc;"></div>
<div style="left:1109px;top:511px;width:13px;height:12px;background:#fff;border:1px solid #c6c6c6;"></div>
<svg style="left:1113px;top:514px;" width="5" height="7" viewBox="0 0 5 7"><polygon points="4,0.5 4,6.5 0.5,3.5" fill="#555"/></svg>
<div style="left:1121px;top:511px;width:138px;height:12px;background:#fff;border:1px solid #c6c6c6;"></div>
<div style="left:1445px;top:511px;width:12px;height:12px;background:#fff;border:1px solid #c6c6c6;"></div>
<svg style="left:1449px;top:514px;" width="5" height="7" viewBox="0 0 5 7"><polygon points="1,0.5 1,6.5 4.5,3.5" fill="#555"/></svg>
<div style="left:535px;top:528px;width:937px;height:17px;background:#f3f3f3;"></div>
<div style="left:1240px;top:528px;width:29px;height:17px;background:#c8c8c8;"></div>
<svg style="left:1249px;top:531px;" width="10" height="10" viewBox="0 0 10 10"><path d="M0.5,0.5 H9.5 V9.5 H0.5 Z M3.5,0.5 V9.5 M6.5,0.5 V9.5 M0.5,3.5 H9.5 M0.5,6.5 H9.5" fill="none" stroke="#555" stroke-width="1"/></svg>
<svg style="left:1278px;top:531px;" width="11" height="11" viewBox="0 0 11 11"><path d="M0.5,0.5 H10.5 V9.5 H0.5 Z" fill="none" stroke="#666" stroke-width="1"/><path d="M3,0.5 H8.5 V7.5 H3 M3.5,4 H7.5 M3.5,6.5 H7.5" fill="none" stroke="#666" stroke-width="1"/></svg>
<svg style="left:1308px;top:531px;" width="11" height="11" viewBox="0 0 11 11"><path d="M0.5,0.5 H10.5 V9.5 H0.5 Z M0.5,5.5 H6 V0.5 M3.5,0.5 V5.5" fill="none" stroke="#666" stroke-width="1"/></svg>
<div style="left:1332px;top:536px;width:5px;height:2px;background:#444;"></div>
<div style="left:1339px;top:536px;width:77px;height:1px;background:#999;"></div>
<div style="left:1376px;top:531px;width:4px;height:11px;background:#666;"></div>
<svg style="left:1418px;top:532px;" width="8" height="8" viewBox="0 0 8 8"><path d="M4,0.5 V7.5 M0.5,4 H7.5" stroke="#444" stroke-width="1.3"/></svg>
<span style="left:1433px;top:531px;font-size:10px;color:#444;transform-origin:0 0;transform:scaleX(0.9383);">100%</span>
<div style="left:1472px;top:48px;width:1px;height:497px;background:#217346;"></div>
</body></html>
